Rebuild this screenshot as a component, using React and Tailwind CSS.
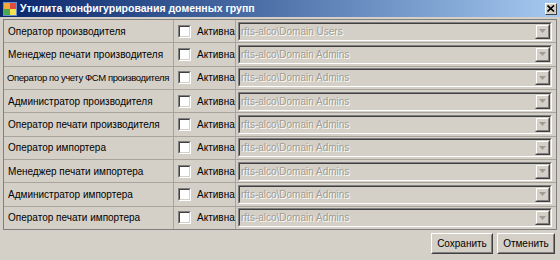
import React from "react";

const rows = [
  ["Оператор производителя", "rfts-alco\\Domain Users"],
  ["Менеджер печати производителя", "rfts-alco\\Domain Admins"],
  ["Оператор по учету ФСМ производителя", "rfts-alco\\Domain Admins", true],
  ["Администратор производителя", "rfts-alco\\Domain Admins"],
  ["Оператор печати производителя", "rfts-alco\\Domain Admins"],
  ["Оператор импортера", "rfts-alco\\Domain Admins"],
  ["Менеджер печати импортера", "rfts-alco\\Domain Admins"],
  ["Администратор импортера", "rfts-alco\\Domain Admins"],
  ["Оператор печати импортера", "rfts-alco\\Domain Admins"],
];

function AppIcon() {
  return (
    <svg width="14" height="14" viewBox="0 0 14 14">
      <rect x="0" y="0" width="14" height="14" fill="#6a8fd0" />
      <rect x="1" y="1" width="6" height="6" fill="#f2a93b" />
      <rect x="7" y="1" width="6" height="6" fill="#e24c3a" />
      <rect x="1" y="7" width="6" height="6" fill="#4aa84a" />
      <rect x="7" y="7" width="6" height="6" fill="#f5e050" />
    </svg>
  );
}

function Checkbox() {
  return (
    <div className="w-[13px] h-[13px] shrink-0 border border-t-[#808080] border-l-[#808080] border-b-white border-r-white">
      <div className="w-full h-full bg-white border border-t-[#404040] border-l-[#404040] border-b-[#d4d0c8] border-r-[#d4d0c8]" />
    </div>
  );
}

function Select({ value }) {
  return (
    <div className="flex-1 h-[19px] border border-t-[#808080] border-l-[#808080] border-b-white border-r-white">
      <div className="h-full flex items-stretch border border-t-[#404040] border-l-[#404040] border-b-[#d4d0c8] border-r-[#d4d0c8] bg-[#d4d0c8]">
        <div className="flex-1 flex items-center pl-[1px] overflow-hidden whitespace-nowrap text-[#a09c94] [text-shadow:1px_1px_0_#ffffff]">
          {value}
        </div>
        <div className="w-[15px] flex items-center justify-center border border-t-[#d4d0c8] border-l-[#d4d0c8] border-b-[#404040] border-r-[#404040]">
          <div className="w-full h-full flex items-center justify-center border border-t-white border-l-white border-b-[#808080] border-r-[#808080]">
            <svg width="7" height="4" viewBox="0 0 7 4">
              <path d="M0 0h7L3.5 4z" fill="#a09c94" />
            </svg>
          </div>
        </div>
      </div>
    </div>
  );
}

function Button({ children, className }) {
  return (
    <div className={"h-[21px] border border-t-white border-l-white border-b-[#404040] border-r-[#404040] " + className}>
      <div className="h-full flex items-center justify-center border border-t-[#d4d0c8] border-l-[#d4d0c8] border-b-[#808080] border-r-[#808080] text-black">
        {children}
      </div>
    </div>
  );
}

export default function App() {
  return (
    <div
      className="w-[560px] h-[260px] bg-[#d4d0c8] flex flex-col text-[10px] text-black overflow-hidden"
      style={{ fontFamily: '"Liberation Sans", Arial, sans-serif' }}
    >
      <div className="h-[17px] flex items-center pl-[3px] pr-[3px] bg-gradient-to-r from-[#0a246a] to-[#a6caf0]">
        <AppIcon />
        <div className="ml-[3px] text-white font-bold text-[10.5px] leading-none">
          Утилита конфигурирования доменных групп
        </div>
        <div className="ml-auto w-[12px] h-[12px] bg-[#d4d0c8] border border-t-white border-l-white border-b-[#404040] border-r-[#404040] flex items-center justify-center">
          <svg width="8" height="7" viewBox="0 0 8 7">
            <path d="M0.5 0.5L7 6.5M7 0.5L0.5 6.5" stroke="#000" strokeWidth="1.6" />
          </svg>
        </div>
      </div>
      <div className="flex-1 flex flex-col px-[3px] pt-[2px] pb-[3px]">
        <div className="h-[211px] flex flex-col border border-[#808080]">
          {rows.map(([label, value, tight], i) => (
            <div
              key={i}
              className={"flex-1 flex items-stretch " + (i < rows.length - 1 ? "border-b border-[#a8a49c]" : "")}
            >
              <div
                className={
                  "w-[170px] flex items-center border-r border-[#a8a49c] whitespace-nowrap overflow-hidden " +
                  (tight ? "pl-[3px] text-[9.5px] tracking-[-0.4px]" : "pl-[4px]")
                }
              >
                {label}
              </div>
              <div className="w-[62px] flex items-center pl-[4px] gap-[6px] border-r border-[#a8a49c] whitespace-nowrap">
                <Checkbox />
                <span>Активна</span>
              </div>
              <div className="flex-1 flex items-center pl-[2px] pr-[4px]">
                <Select value={value} />
              </div>
            </div>
          ))}
        </div>
        <div className="flex-1 flex items-center justify-end gap-[4px] pr-[2px]">
          <Button className="w-[62px]">Сохранить</Button>
          <Button className="w-[58px]">Отменить</Button>
        </div>
      </div>
    </div>
  );
}
